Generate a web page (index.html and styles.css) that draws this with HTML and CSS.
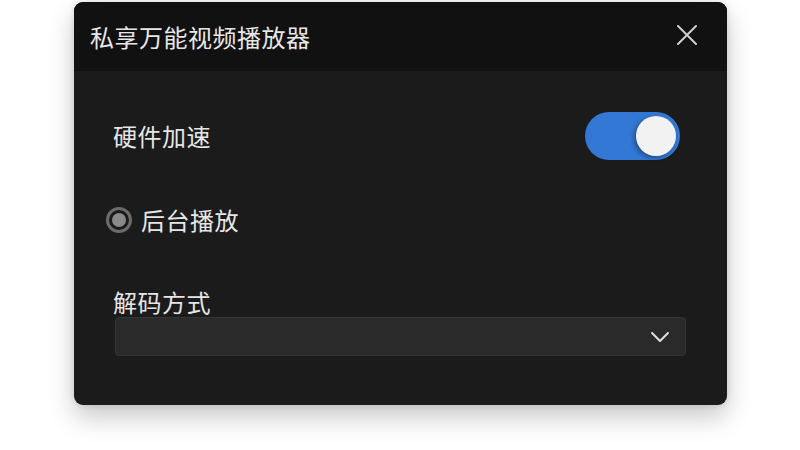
FILE: index.html
```html
<!DOCTYPE html>
<html lang="zh-CN">
<head>
    <meta charset="UTF-8">
    <meta name="viewport" content="width=device-width, initial-scale=1.0">
    <title>私享万能视频播放器</title>
    <link rel="stylesheet" href="styles.css">
</head>
<body>
    <div class="dialog">
        <div class="dialog-header">
            <div class="dialog-title">私享万能视频播放器</div>
            <button class="close-button" aria-label="关闭">
                <svg width="20" height="20" viewBox="0 0 20 20">
                    <path d="M1 1 L19 19 M19 1 L1 19" stroke="#cfcfcf" stroke-width="2" stroke-linecap="round"/>
                </svg>
            </button>
        </div>
        <div class="dialog-body">
            <div class="setting-row">
                <span class="setting-label">硬件加速</span>
                <label class="toggle">
                    <input type="checkbox" checked>
                    <span class="toggle-track"><span class="toggle-knob"></span></span>
                </label>
            </div>
            <label class="radio-row">
                <span class="radio-dot"></span>
                <span class="setting-label">后台播放</span>
            </label>
            <div class="select-group">
                <span class="setting-label">解码方式</span>
                <div class="select-box">
                    <svg class="chevron" width="20" height="12" viewBox="0 0 20 12">
                        <path d="M2 2 L10 10 L18 2" fill="none" stroke="#e0e0e0" stroke-width="2" stroke-linecap="round" stroke-linejoin="round"/>
                    </svg>
                </div>
            </div>
        </div>
    </div>
</body>
</html>
```

FILE: styles.css
```css
html, body {
    height: 100%;
}
body {
    margin: 0;
    background-color: #ffffff;
    font-family: "Noto Sans CJK SC", "Noto Sans", sans-serif;
}
.dialog {
    width: 653px;
    height: 403px;
    margin: 2px 0 0 74px;
    background-color: #1b1b1b;
    border-radius: 9px;
    overflow: hidden;
    box-shadow: 0 12px 26px rgba(0, 0, 0, 0.22), 0 0 6px rgba(0, 0, 0, 0.12);
    display: flex;
    flex-direction: column;
}
.dialog-header {
    height: 69px;
    flex-shrink: 0;
    background-color: #111111;
    display: flex;
    align-items: center;
    justify-content: space-between;
    padding: 0 30px 0 16px;
}
.dialog-title {
    font-size: 24px;
    color: #e8e8e8;
    letter-spacing: 0.5px;
}
.close-button {
    background: none;
    border: none;
    padding: 0;
    margin-bottom: 4px;
    display: flex;
    cursor: pointer;
}
.dialog-body {
    padding: 41px 41px 0 39px;
    display: flex;
    flex-direction: column;
}
.setting-label {
    font-size: 24px;
    line-height: 34px;
    color: #e6e6e6;
    letter-spacing: 0.5px;
}
.setting-row {
    display: flex;
    align-items: center;
    justify-content: space-between;
    height: 48px;
}
.toggle {
    margin-right: 6px;
}
.toggle input {
    display: none;
}
.toggle-track {
    width: 95px;
    height: 48px;
    border-radius: 24px;
    background-color: #3378d4;
    display: flex;
    align-items: center;
    justify-content: flex-end;
    padding: 0 4px;
    box-sizing: border-box;
}
.toggle-knob {
    width: 40px;
    height: 40px;
    border-radius: 50%;
    background-color: #f2f2f2;
    box-shadow: -2px 2px 5px rgba(0, 0, 0, 0.35);
}
.radio-row {
    display: flex;
    align-items: center;
    gap: 9px;
    margin: 43px 0 0 -7px;
}
.radio-dot {
    width: 20px;
    height: 20px;
    border: 3px solid #6b6b6b;
    border-radius: 50%;
    background-color: #1b1b1b;
    display: flex;
    align-items: center;
    justify-content: center;
}
.radio-dot::after {
    content: "";
    width: 14px;
    height: 14px;
    border-radius: 50%;
    background-color: #8a8a8a;
}
.select-group {
    margin-top: 48px;
    display: flex;
    flex-direction: column;
}
.select-box {
    margin: -2px 0 0 2px;
    height: 37px;
    background-color: #2a2a2a;
    border: 1px solid #353535;
    border-radius: 4px;
    display: flex;
    align-items: center;
    justify-content: flex-end;
    padding-right: 15px;
}
```
